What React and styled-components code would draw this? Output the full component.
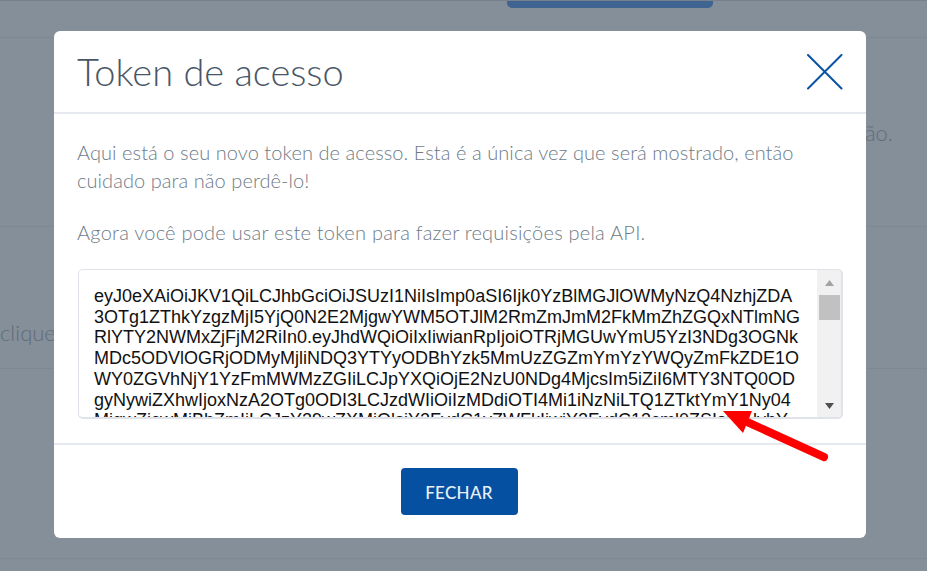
import React from "react";
import styled, { createGlobalStyle } from "styled-components";

const Global = createGlobalStyle`
  html, body { margin: 0; padding: 0; height: 100%; overflow: hidden; background: #848f99; }
  * { box-sizing: border-box; }
`;

const Page = styled.div`
  position: relative;
  width: 927px;
  height: 571px;
  overflow: hidden;
  background: #848f99;
  font-family: Lato, "Liberation Sans", sans-serif;
  color: #626d78;
`;
const TopRow = styled.div`
  height: 38px;
  border-top: 1px solid #76818b;
  border-bottom: 1px solid #7d8892;
  display: flex;
  justify-content: flex-start;
  padding-left: 507px;
`;
const TopButton = styled.div`
  width: 206px;
  height: 7px;
  background: #3f6491;
  border-radius: 0 0 5px 5px;
`;
const Row = styled.div`
  height: ${(p) => p.$h}px;
  border-bottom: 1px solid #7d8892;
  display: flex;
  align-items: ${(p) => p.$align || "center"};
  justify-content: ${(p) => (p.$end ? "flex-end" : "flex-start")};
  padding: ${(p) => p.$pad || "0"};
  font-size: 22px;
  font-weight: 300;
  white-space: nowrap;
`;
const Overlay = styled.div`
  position: absolute;
  inset: 0;
  display: flex;
  justify-content: flex-start;
  align-items: flex-start;
  padding: 31px 0 0 54px;
`;
const Modal = styled.div`
  width: 812px;
  height: 507px;
  background: #fff;
  border-radius: 6px;
  display: flex;
  flex-direction: column;
`;
const Header = styled.header`
  height: 83px;
  border-bottom: 2px solid #e6e9ef;
  display: flex;
  align-items: center;
  justify-content: space-between;
  padding: 0 23px;
`;
const Title = styled.h2`
  margin: -2px 0 0;
  font-size: 38px;
  font-weight: 300;
  line-height: 44px;
  color: #4a5667;
`;
const Close = styled.button`
  border: 0;
  background: none;
  padding: 0;
  width: 36px;
  height: 36px;
  display: flex;
`;
const Body = styled.div`
  height: 331px;
  padding: 24px 23px 0 23px;
  border-bottom: 2px solid #e6e9ef;
`;
const Para = styled.p`
  margin: 0 0 24px;
  font-size: 20px;
  font-weight: 300;
  line-height: 28px;
  letter-spacing: ${(p) => p.$spacing || 0}px;
  color: #6e7b87;
  width: 740px;
`;
const TokenBox = styled.div`
  width: 765px;
  height: 150px;
  margin: -1px 0 0 1px;
  border: 1px solid #dfe2e9;
  border-width: 1px 2px 2px 1px;
  border-radius: 5px;
  display: flex;
  overflow: hidden;
`;
const TokenText = styled.div`
  flex: 1;
  padding: 16px 0 0 15px;
  font-family: "Liberation Sans", Arial, sans-serif;
  font-size: 18px;
  line-height: 20.7px;
  color: #111;
  white-space: nowrap;
  overflow: hidden;
`;
const TokenLine = styled.div``;
const Scrollbar = styled.div`
  width: 24px;
  background: #f1f1f1;
  display: flex;
  flex-direction: column;
  align-items: center;
  padding-top: 10px;
`;
const Thumb = styled.div`
  width: 21px;
  height: 25px;
  background: #c1c1c1;
  margin: 9px 0 auto;
`;
const Arrow = styled.svg`
  display: block;
  width: 9px;
  height: 6px;
  margin-bottom: ${(p) => p.$mb || 0}px;
`;
const Footer = styled.footer`
  flex: 1;
  display: flex;
  align-items: flex-start;
  justify-content: center;
  padding: 23px 2px 0 0;
`;
const CloseButton = styled.button`
  width: 117px;
  height: 47px;
  border: 0;
  border-radius: 4px;
  padding: 2px 0 0;
  background: #0650a2;
  color: #e9eff7;
  font-family: Lato, "Open Sans", sans-serif;
  font-size: 17px;
  font-weight: 500;
  letter-spacing: 0.3px;
`;
const Pointer = styled.svg`
  position: absolute;
  left: 715px;
  top: 405px;
  width: 120px;
  height: 65px;
`;

const lines = [
  "eyJ0eXAiOiJKV1QiLCJhbGciOiJSUzI1NiIsImp0aSI6Ijk0YzBlMGJlOWMyNzQ4NzhjZDA",
  "3OTg1ZThkYzgzMjI5YjQ0N2E2MjgwYWM5OTJlM2RmZmJmM2FkMmZhZGQxNTlmNG",
  "RlYTY2NWMxZjFjM2RiIn0.eyJhdWQiOiIxIiwianRpIjoiOTRjMGUwYmU5YzI3NDg3OGNk",
  "MDc5ODVlOGRjODMyMjliNDQ3YTYyODBhYzk5MmUzZGZmYmYzYWQyZmFkZDE1O",
  "WY0ZGVhNjY1YzFmMWMzZGIiLCJpYXQiOjE2NzU0NDg4MjcsIm5iZiI6MTY3NTQ0OD",
  "gyNywiZXhwIjoxNzA2OTg0ODI3LCJzdWIiOiIzMDdiOTI4Mi1iNzNiLTQ1ZTktYmY1Ny04",
  "MiqwZjcwMiBhZmIiLCJzY29wZXMiOlsiY2FydC1yZWFkIiwiY2FydC13cml0ZSIsInAlvbY",
];

export default function App() {
  return (
    <Page>
      <Global />
      <TopRow><TopButton /></TopRow>
      <Row $h={189} $end $align="flex-start" $pad="81px 34px 0 0">
        Esta é a descrição.
      </Row>
      <Row $h={142} $align="flex-start" $pad="92px 0 0 0">clique</Row>
      <Row $h={190} />
      <Overlay>
        <Modal>
          <Header>
            <Title>Token de acesso</Title>
            <Close aria-label="Fechar">
              <svg width="36" height="36" viewBox="0 0 36 36" fill="none" stroke="#0a52a3" strokeWidth="2" strokeLinecap="round">
                <path d="M1 1 L34.5 34.5 M34.5 1 L1 34.5" />
              </svg>
            </Close>
          </Header>
          <Body>
            <Para $spacing={0.07}>
              Aqui está o seu novo token de acesso. Esta é a única vez que será mostrado, então cuidado para não perdê-lo!
            </Para>
            <Para $spacing={0.23}>Agora você pode usar este token para fazer requisições pela API.</Para>
            <TokenBox>
              <TokenText>
                {lines.map((l) => <TokenLine key={l}>{l}</TokenLine>)}
              </TokenText>
              <Scrollbar>
                <Arrow viewBox="0 0 9 6"><path d="M4.5 0 L9 6 L0 6 Z" fill="#a3a3a3" /></Arrow>
                <Thumb />
                <Arrow $mb={8} viewBox="0 0 9 6"><path d="M0 0 L9 0 L4.5 6 Z" fill="#505050" /></Arrow>
              </Scrollbar>
            </TokenBox>
          </Body>
          <Footer>
            <CloseButton>FECHAR</CloseButton>
          </Footer>
        </Modal>
      </Overlay>
      <Pointer viewBox="0 0 120 65">
        <path d="M8 6 L37 6 L28 28 Z" fill="#ff0000" />
        <path d="M30 16 L109 52" stroke="#ff0000" strokeWidth="8" strokeLinecap="round" />
      </Pointer>
    </Page>
  );
}
